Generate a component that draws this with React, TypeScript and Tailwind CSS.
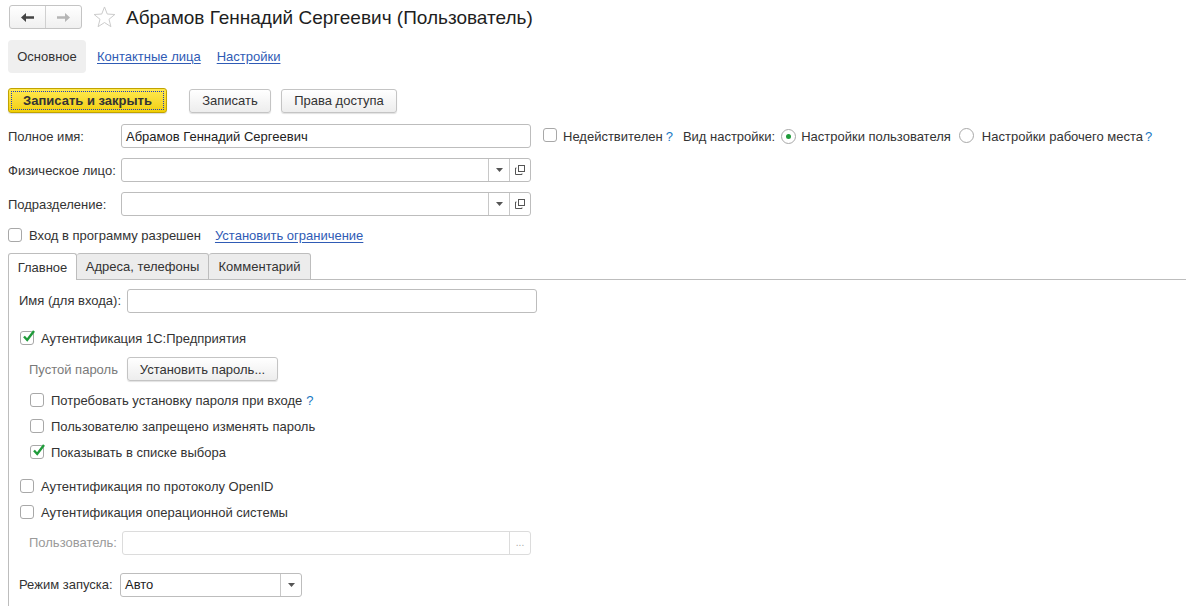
import React from "react";

const linkCls = "text-[#2f5bb5] underline underline-offset-2 decoration-[#2f5bb5]";

const Check = ({ checked = false }: { checked?: boolean }) => (
  <span className="relative inline-block w-[14px] h-[14px] shrink-0 rounded-[3px] border border-[#a8a8a8] bg-white">
    {checked && (
      <svg className="absolute -top-[3px] left-[1px]" width="14" height="14" viewBox="0 0 14 14">
        <path d="M2 7.5 L5.2 11 L12 2" fill="none" stroke="#1f9b3a" strokeWidth="2.4" />
      </svg>
    )}
  </span>
);

const Radio = ({ checked = false }: { checked?: boolean }) => (
  <span className="inline-flex items-center justify-center w-[15px] h-[15px] shrink-0 rounded-full border border-[#a8a8a8] bg-white">
    {checked && <span className="w-[5px] h-[5px] rounded-full bg-[#1f9b3a]" />}
  </span>
);

const Help = ({ className = "ml-[6px]" }: { className?: string }) => (
  <span className={"text-[#1a78c2] " + className}>?</span>
);

const Btn = ({ children, className = "" }: { children: React.ReactNode; className?: string }) => (
  <div
    className={
      "h-[24px] flex items-center justify-center rounded-[3px] border border-[#c4c4c4] bg-gradient-to-b from-white to-[#ededed] shadow-[0_1px_1px_rgba(0,0,0,0.12)] text-[#333] " +
      className
    }
  >
    {children}
  </div>
);

const Arrow = () => (
  <div className="w-[21px] h-full flex items-center justify-center border-l border-[#c8c8c8]">
    <svg width="7" height="4" viewBox="0 0 7 4">
      <path d="M0 0 H7 L3.5 4 Z" fill="#555" />
    </svg>
  </div>
);

const OpenIcon = () => (
  <div className="w-[21px] h-full flex items-center justify-center border-l border-[#c8c8c8]">
    <svg width="10" height="10" viewBox="0 0 10 10">
      <rect x="3.5" y="0.5" width="6" height="6" fill="none" stroke="#555" />
      <path d="M2 2.5 H1 V9 H7.5 V8" fill="none" stroke="#555" transform="translate(-0.5 0.5)" />
    </svg>
  </div>
);

const Field = ({ children, className = "", disabled = false }: { children?: React.ReactNode; className?: string; disabled?: boolean }) => (
  <div
    className={
      "h-[24px] flex items-stretch rounded-[3px] border bg-white " +
      (disabled ? "border-[#dcdcdc] " : "border-[#bdbdbd] ") +
      className
    }
  >
    {children}
  </div>
);

export default function App() {
  return (
    <div className="w-[1186px] h-[606px] overflow-hidden bg-white text-[13px] text-[#333] font-['Liberation_Sans',Arial,sans-serif] leading-none">
      {/* header */}
      <div className="flex items-center pt-[5px] pl-[9px] h-[29px]">
        <div className="flex h-[24px] w-[73px] rounded-[3px] border border-[#c4c4c4] bg-gradient-to-b from-white to-[#f0f0f0]">
          <div className="w-[36px] flex items-center justify-center border-r border-[#d0d0d0]">
            <svg width="13" height="9" viewBox="0 0 13 9">
              <path d="M0 4.5 L5 0 V3.3 H13 V5.7 H5 V9 Z" fill="#444" />
            </svg>
          </div>
          <div className="flex-1 flex items-center justify-center">
            <svg width="13" height="9" viewBox="0 0 13 9">
              <path d="M13 4.5 L8 0 V3.3 H0 V5.7 H8 V9 Z" fill="#b5b5b5" />
            </svg>
          </div>
        </div>
        <svg className="ml-[11px]" width="23" height="22" viewBox="0 0 24 23">
          <path
            d="M12 1 L14.9 8.4 L22.8 8.9 L16.7 13.9 L18.7 21.6 L12 17.3 L5.3 21.6 L7.3 13.9 L1.2 8.9 L9.1 8.4 Z"
            fill="none"
            stroke="#c8c8c8"
            strokeWidth="1"
          />
        </svg>
        <div className="ml-[10px] text-[19px] text-[#1e1e1e]">Абрамов Геннадий Сергеевич (Пользователь)</div>
      </div>

      {/* sections */}
      <div className="flex items-center mt-[11px] ml-[8px] h-[33px]">
        <div className="h-full w-[78px] flex items-center justify-center rounded-[4px] bg-[#efefef]">Основное</div>
        <span className={linkCls + " ml-[11px]"}>Контактные лица</span>
        <span className={linkCls + " ml-[16px]"}>Настройки</span>
      </div>

      {/* command bar */}
      <div className="flex items-center mt-[15px] ml-[8px] h-[25px]">
        <div className="h-[25px] w-[159px] p-[2px] rounded-[3px] border border-[#c1a300] bg-gradient-to-b from-[#ffe94d] to-[#f2cf00] shadow-[0_1px_1px_rgba(0,0,0,0.15)]">
          <div className="h-full flex items-center justify-center border border-dotted border-[#1f3fbf] font-bold text-[#333]">
            Записать и закрыть
          </div>
        </div>
        <Btn className="w-[82px] ml-[22px]">Записать</Btn>
        <Btn className="w-[116px] ml-[10px]">Права доступа</Btn>
      </div>

      {/* full name row */}
      <div className="flex items-center mt-[11px] ml-[8px] h-[24px]">
        <div className="w-[113px]">Полное имя:</div>
        <Field className="w-[410px]">
          <div className="flex items-center pl-[4px] text-[#222]">Абрамов Геннадий Сергеевич</div>
        </Field>
        <div className="ml-[12px]">
          <Check />
        </div>
        <span className="ml-[6px]">Недействителен</span>
        <Help className="ml-[3px]" />
        <span className="ml-[10px]">Вид настройки:</span>
        <span className="ml-[6px]">
          <Radio checked />
        </span>
        <span className="ml-[5px]">Настройки пользователя</span>
        <span className="ml-[8px]">
          <Radio />
        </span>
        <span className="ml-[8px]">Настройки рабочего места</span>
        <Help className="ml-[2px]" />
      </div>

      <div className="flex items-center mt-[10px] ml-[8px] h-[24px]">
        <div className="w-[113px]">Физическое лицо:</div>
        <Field className="w-[410px]">
          <div className="flex-1" />
          <Arrow />
          <OpenIcon />
        </Field>
      </div>

      <div className="flex items-center mt-[10px] ml-[8px] h-[24px]">
        <div className="w-[113px]">Подразделение:</div>
        <Field className="w-[410px]">
          <div className="flex-1" />
          <Arrow />
          <OpenIcon />
        </Field>
      </div>

      <div className="flex items-center mt-[11px] ml-[8px] h-[16px]">
        <Check />
        <span className="ml-[7px]">Вход в программу разрешен</span>
        <span className={linkCls + " ml-[14px]"}>Установить ограничение</span>
      </div>

      {/* tabs */}
      <div className="flex mt-[10px] ml-[8px] h-[27px]">
        <div className="w-[69px] flex items-center justify-center rounded-t-[3px] border border-b-0 border-[#bdbdbd] bg-white">Главное</div>
        <div className="w-[132px] flex items-center justify-center rounded-t-[3px] border border-l-0 border-[#bdbdbd] bg-[#ececec]">Адреса, телефоны</div>
        <div className="w-[102px] flex items-center justify-center rounded-t-[3px] border border-l-0 border-[#bdbdbd] bg-[#ececec]">Комментарий</div>
        <div className="flex-1 border-b border-[#bdbdbd]" />
      </div>

      {/* tab page */}
      <div className="ml-[8px] border-l border-[#bdbdbd] h-[400px] pt-[8px]">
        <div className="flex items-center h-[25px] pl-[10px]">
          <div className="w-[108px]">Имя (для входа):</div>
          <Field className="w-[410px]" />
        </div>

        <div className="flex items-center mt-[17px] h-[16px] pl-[11px]">
          <Check checked />
          <span className="ml-[7px]">Аутентификация 1С:Предприятия</span>
        </div>

        <div className="flex items-center mt-[11px] h-[24px] pl-[20px]">
          <span className="w-[98px] text-[#7a7a7a]">Пустой пароль</span>
          <Btn className="w-[151px]">Установить пароль...</Btn>
        </div>

        <div className="flex items-center mt-[11px] h-[16px] pl-[21px]">
          <Check />
          <span className="ml-[7px]">Потребовать установку пароля при входе</span>
          <Help className="ml-[4px]" />
        </div>
        <div className="flex items-center mt-[10px] h-[16px] pl-[21px]">
          <Check />
          <span className="ml-[7px]">Пользователю запрещено изменять пароль</span>
        </div>
        <div className="flex items-center mt-[10px] h-[16px] pl-[21px]">
          <Check checked />
          <span className="ml-[7px]">Показывать в списке выбора</span>
        </div>

        <div className="flex items-center mt-[18px] h-[16px] pl-[11px]">
          <Check />
          <span className="ml-[7px]">Аутентификация по протоколу OpenID</span>
        </div>
        <div className="flex items-center mt-[10px] h-[16px] pl-[11px]">
          <Check />
          <span className="ml-[7px]">Аутентификация операционной системы</span>
        </div>

        <div className="flex items-center mt-[10px] h-[25px] pl-[20px]">
          <span className="w-[93px] text-[#9a9a9a]">Пользователь:</span>
          <Field disabled className="w-[409px]">
            <div className="flex-1" />
            <div className="w-[21px] flex items-center justify-center border-l border-[#dcdcdc] text-[#aaa] text-[10px]">...</div>
          </Field>
        </div>

        <div className="flex items-center mt-[17px] h-[25px] pl-[10px]">
          <span className="w-[101px]">Режим запуска:</span>
          <Field className="w-[182px]">
            <div className="flex-1 flex items-center pl-[4px] text-[#222]">Авто</div>
            <Arrow />
          </Field>
        </div>
      </div>
    </div>
  );
}
